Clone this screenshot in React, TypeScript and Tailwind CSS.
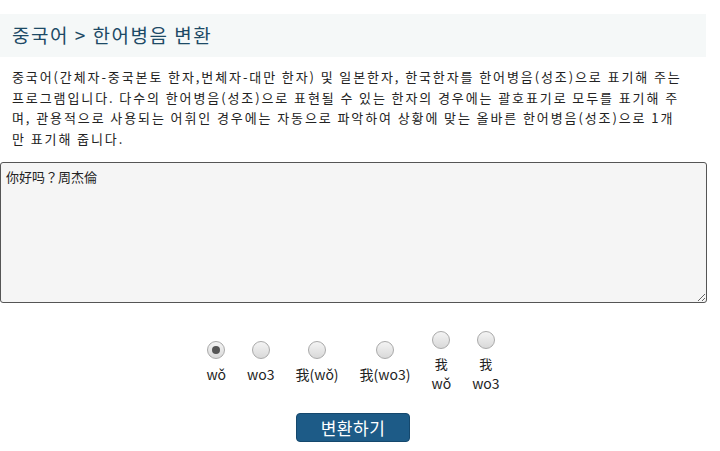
const FONT = "font-['Noto_Sans_CJK_KR','Noto_Sans',sans-serif]";

const LINES = [
  "중국어(간체자-중국본토 한자,번체자-대만 한자) 및 일본한자, 한국한자를 한어병음(성조)으로 표기해 주는",
  "프로그램입니다. 다수의 한어병음(성조)으로 표현될 수 있는 한자의 경우에는 괄호표기로 모두를 표기해 주",
  "며, 관용적으로 사용되는 어휘인 경우에는 자동으로 파악하여 상황에 맞는 올바른 한어병음(성조)으로 1개",
  "만 표기해 줍니다.",
];

const OPTIONS: { id: string; label: string[] }[] = [
  { id: "mark", label: ["wǒ"] },
  { id: "num", label: ["wo3"] },
  { id: "han-mark", label: ["我(wǒ)"] },
  { id: "han-num", label: ["我(wo3)"] },
  { id: "ruby-mark", label: ["我", "wǒ"] },
  { id: "ruby-num", label: ["我", "wo3"] },
];

function Radio({ on }: { on: boolean }) {
  return (
    <span className="flex h-[18px] w-[18px] items-center justify-center rounded-full border border-[#a9a9a9] bg-gradient-to-b from-[#f4f4f4] to-[#d9d9d9]">
      {on && <span className="h-[8px] w-[8px] rounded-full bg-[#555]" />}
    </span>
  );
}

export default function App() {
  return (
    <div className={`w-[706px] ${FONT}`}>
      {/* page title band */}
      <div className="mt-[14px] flex h-[43px] items-center bg-[#f5f8f8] pl-3 text-[19px] tracking-[1.5px] text-[#1d4a66]">
        중국어 &gt; 한어병음 변환
      </div>

      <p className="mt-[10px] px-3 text-[13px] leading-[20.5px] tracking-[1.9px] text-[#222]">
        {LINES.map((l) => (
          <span key={l} className="block whitespace-nowrap">
            {l}
          </span>
        ))}
      </p>

      <textarea
        defaultValue="你好吗？周杰倫"
        className={`mt-[13px] block h-[141px] w-[707px] rounded-[3px] border border-[#555] bg-[#f5f5f5] px-[5px] py-[5px] text-[13px] leading-[18px] text-[#222] outline-none ${FONT}`}
      />

      {/* output style */}
      <div className="mt-[28px] flex items-center justify-center gap-[21px]">
        {OPTIONS.map((o, i) => (
          <label key={o.id} className="flex flex-col items-center">
            <Radio on={i === 0} />
            <span className="mt-[6px] flex flex-col items-center text-[14px] text-[#222]">
              {o.label.map((t) =>
                t === "我" ? (
                  <span key={t} className="block h-[19px] text-[13px] leading-[17px]">
                    {t}
                  </span>
                ) : (
                  <span key={t} className="block h-[19px] leading-[19px]">
                    {t}
                  </span>
                )
              )}
            </span>
          </label>
        ))}
      </div>

      <div className="mt-[20px] flex justify-center">
        <button
          type="button"
          className="h-[29px] w-[114px] rounded-[4px] border border-[#15486d] bg-[#1d5b87] text-[17px] tracking-[0.5px] text-white"
        >
          변환하기
        </button>
      </div>
    </div>
  );
}
